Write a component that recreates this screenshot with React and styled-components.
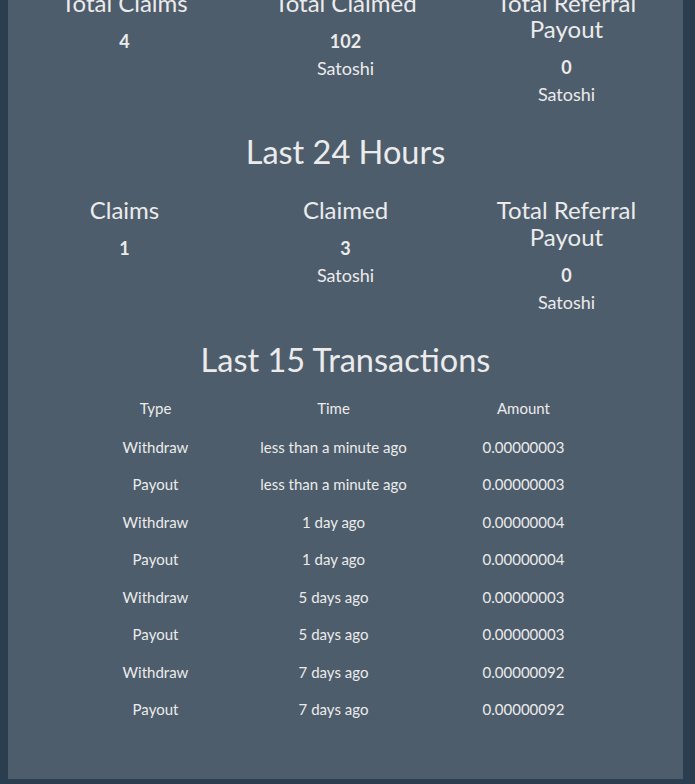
import React from "react";
import styled, { createGlobalStyle } from "styled-components";

const Global = createGlobalStyle`
  html, body { margin: 0; padding: 0; background: #2b3e50; }
  body { font-family: Lato, "Open Sans", sans-serif; color: #ebebeb; }
`;

const Viewport = styled.div`
  height: 784px;
  overflow: hidden;
  padding: 0 12px 0 8px;
  box-sizing: border-box;
`;

const Panel = styled.div`
  background: #4e5d6c;
  padding: 0 6px 50px;
  margin-top: -10px;
`;

const StatsRow = styled.div`
  display: grid;
  grid-template-columns: repeat(3, 1fr);
  text-align: center;
`;

const StatCol = styled.div`
  padding: 0 15px;
`;

const StatLabel = styled.h3`
  font-size: 24px;
  font-weight: 400;
  line-height: 1.1;
  margin: 0 0 11.5px;
`;

const StatValue = styled.div`
  font-size: 18px;
  line-height: 27px;
  font-weight: ${(p) => (p.$bold ? 700 : 400)};
`;

const Title = styled.h2`
  font-size: 32.5px;
  font-weight: 400;
  line-height: 1.1;
  text-align: center;
  margin: 26px 0 ${(p) => p.$gap}px;
`;

const Table = styled.table`
  width: 500px;
  margin: 0 auto;
  border-collapse: collapse;
  table-layout: fixed;
  font-size: 15px;
`;

const Cell = styled.td`
  padding: 8px;
  line-height: 21.57px;
  text-align: center;
  white-space: nowrap;
`;

const HeadCell = styled(Cell).attrs({ as: "th" })`
  font-weight: 400;
  padding-bottom: 8.5px;
`;

const Stat = ({ label, value, unit }) => (
  <StatCol>
    <StatLabel>{label}</StatLabel>
    <StatValue $bold>{value}</StatValue>
    {unit && <StatValue>{unit}</StatValue>}
  </StatCol>
);

const rows = [
  ["Withdraw", "less than a minute ago", "0.00000003"],
  ["Payout", "less than a minute ago", "0.00000003"],
  ["Withdraw", "1 day ago", "0.00000004"],
  ["Payout", "1 day ago", "0.00000004"],
  ["Withdraw", "5 days ago", "0.00000003"],
  ["Payout", "5 days ago", "0.00000003"],
  ["Withdraw", "7 days ago", "0.00000092"],
  ["Payout", "7 days ago", "0.00000092"],
];

export default function App() {
  return (
    <>
      <Global />
      <Viewport>
        <Panel>
          <StatsRow>
            <Stat label="Total Claims" value="4" />
            <Stat label="Total Claimed" value="102" unit="Satoshi" />
            <Stat label="Total Referral Payout" value="0" unit="Satoshi" />
          </StatsRow>
          <Title $gap={27.4}>Last 24 Hours</Title>
          <StatsRow>
            <Stat label="Claims" value="1" />
            <Stat label="Claimed" value="3" unit="Satoshi" />
            <Stat label="Total Referral Payout" value="0" unit="Satoshi" />
          </StatsRow>
          <Title $gap={13}>Last 15 Transactions</Title>
          <Table>
            <colgroup>
              <col style={{ width: 120 }} />
              <col style={{ width: 236 }} />
              <col style={{ width: 144 }} />
            </colgroup>
            <thead>
              <tr>
                <HeadCell>Type</HeadCell>
                <HeadCell>Time</HeadCell>
                <HeadCell>Amount</HeadCell>
              </tr>
            </thead>
            <tbody>
              {rows.map((r, i) => (
                <tr key={i}>
                  {r.map((c, j) => (
                    <Cell key={j}>{c}</Cell>
                  ))}
                </tr>
              ))}
            </tbody>
          </Table>
        </Panel>
      </Viewport>
    </>
  );
}
